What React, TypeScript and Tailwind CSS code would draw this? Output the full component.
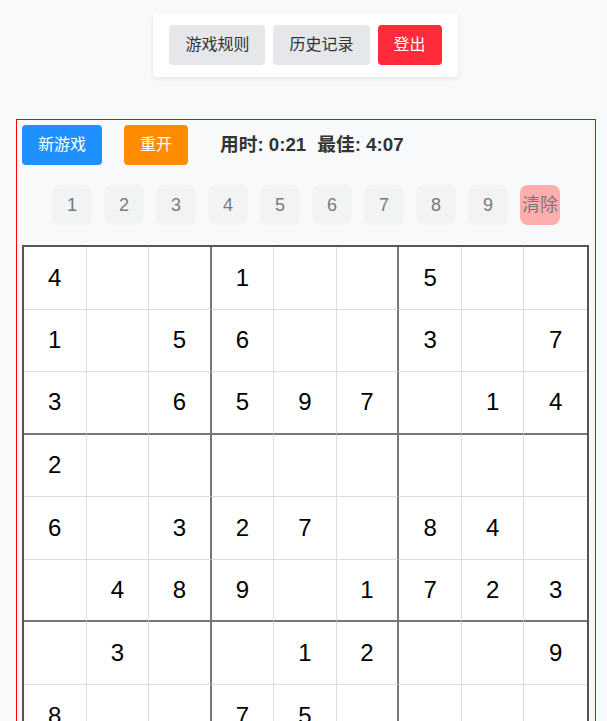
import React from "react";

const grid: (number | null)[][] = [
  [4, null, null, 1, null, null, 5, null, null],
  [1, null, 5, 6, null, null, 3, null, 7],
  [3, null, 6, 5, 9, 7, null, 1, 4],
  [2, null, null, null, null, null, null, null, null],
  [6, null, 3, 2, 7, null, 8, 4, null],
  [null, 4, 8, 9, null, 1, 7, 2, 3],
  [null, 3, null, null, 1, 2, null, null, 9],
  [8, null, null, 7, 5, null, null, null, null],
  [null, null, null, null, null, null, null, null, null],
];

const FONT = { fontFamily: '"Liberation Sans", "Noto Sans CJK SC", Arial, sans-serif' };

export default function App() {
  return (
    <div className="min-h-screen bg-[#f8f9fa] text-[#333]" style={FONT}>
      <div className="flex justify-center pt-[13px] pl-1">
        <div className="flex gap-2 bg-white px-4 py-3 rounded-sm shadow-[0_2px_4px_rgba(0,0,0,0.08)]">
          <button className="h-10 px-4 rounded bg-[#e5e7eb] text-[#333] text-base">游戏规则</button>
          <button className="h-10 px-4 rounded bg-[#e5e7eb] text-[#333] text-base">历史记录</button>
          <button className="h-10 px-4 rounded bg-[#ff2a3a] text-white text-base">登出</button>
        </div>
      </div>

      <div className="ml-4 mt-[42px] w-[580px] border border-[#ff0000] pl-[5px] pt-[5px]">
        <div className="flex items-center h-10">
          <button className="h-10 w-20 rounded bg-[#1e90ff] text-white text-base">新游戏</button>
          <button className="ml-[22px] h-10 w-16 rounded bg-[#ff8c00] text-white text-base">重开</button>
          <div className="ml-8 flex gap-[11px] text-[18.72px] font-bold text-[#333]">
            <span>用时: 0:21</span>
            <span>最佳: 4:07</span>
          </div>
        </div>

        <div className="flex justify-center gap-3 mt-5 pr-[5px]">
          {[1, 2, 3, 4, 5, 6, 7, 8, 9].map((n) => (
            <button
              key={n}
              className="w-10 h-10 rounded-lg bg-[#f2f3f3] text-[#7a7a7a] text-lg flex items-center justify-center"
            >
              {n}
            </button>
          ))}
          <button className="w-10 h-10 rounded-lg bg-[#ffadad] text-[#7a7a7a] text-lg flex items-center justify-center whitespace-nowrap">
            清除
          </button>
        </div>

        <div className="mt-5 w-[567px] border-2 border-[#555] grid grid-cols-9 bg-white">
          {grid.map((row, r) =>
            row.map((v, c) => {
              const rb =
                c === 8
                  ? ""
                  : c === 2 || c === 5
                  ? "border-r-2 border-r-[#777]"
                  : "border-r border-r-[#ddd]";
              const bb =
                r === 8
                  ? ""
                  : r === 2 || r === 5
                  ? "border-b-2 border-b-[#777]"
                  : "border-b border-b-[#ddd]";
              return (
                <div
                  key={`${r}-${c}`}
                  className={`aspect-square flex items-center justify-center text-2xl text-black ${rb} ${bb}`}
                >
                  {v ?? ""}
                </div>
              );
            })
          )}
        </div>
      </div>
    </div>
  );
}
